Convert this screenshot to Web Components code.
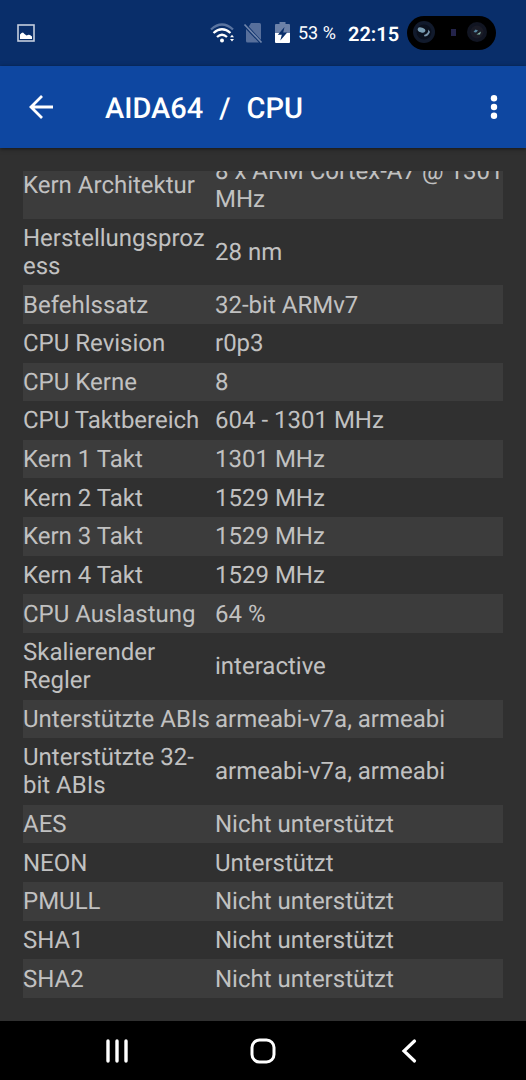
<!DOCTYPE html>
<html lang="de">
<head>
<meta charset="utf-8">
<meta name="viewport" content="width=device-width, initial-scale=1">
<title>AIDA64 / CPU</title>
<style>
  body { margin: 0; background: #303030; font-family: Roboto, "Noto Sans", sans-serif; text-rendering: geometricPrecision; }
</style>
</head>
<body>
<phone-screen>
  <status-bar slot="status"></status-bar>
  <app-bar slot="bar"><span>AIDA64</span><span>/</span><span>CPU</span></app-bar>
  <info-table></info-table>
  <nav-bar slot="nav"></nav-bar>
</phone-screen>

<template id="screen-tpl">
  <style>
    :host { display: flex; flex-direction: column; height: 100vh; background: #303030; }
    main { flex: 1; min-height: 0; display: flex; padding: 23px; box-sizing: border-box; }
    ::slotted(info-table) { flex: 1; }
  </style>
  <slot name="status"></slot>
  <slot name="bar"></slot>
  <main><slot></slot></main>
  <slot name="nav"></slot>
</template>

<template id="status-tpl">
  <style>
    :host { display: flex; align-items: center; height: 66px; flex: none; background: #092e6a; color: #fff; padding: 0 30px 0 17px; box-sizing: border-box; }
    svg { display: block; flex: none; }
    .right { margin-left: auto; display: flex; align-items: center; }
    .wifi { margin-right: 8px; }
    .sim { margin-right: 12px; }
    .battery { margin-right: 8px; }
    .percent { font-size: 18px; line-height: 24px; width: 50px; white-space: nowrap; padding-top: 2px; }
    .time { font-size: 20px; line-height: 24px; width: 52px; font-weight: 600; margin-right: 6px; padding-top: 2px; }
  </style>
  <svg width="18" height="18" viewBox="0 0 18 18" aria-hidden="true">
    <rect x="1" y="1" width="16" height="16" fill="none" stroke="#c5cede" stroke-width="1.6"/>
    <path d="M3 15V10.500L4.500 9L6 8.500L7.500 10L9.500 11.500L11.500 10.700L13 11L15 12.500V15Z" fill="#fff"/>
  </svg>
  <div class="right">
    <svg class="wifi" width="25" height="22" viewBox="0 0 25 22" fill="none" aria-hidden="true">
      <path d="M1 7.500Q12 -2.500 23 7.500" stroke="#5a74a0" stroke-width="2.300"/>
      <path d="M3.500 11Q12 3.500 20.500 11" stroke="#fff" stroke-width="2.300"/>
      <path d="M7 15Q12 10.500 17 15" stroke="#fff" stroke-width="2.300"/>
      <circle cx="12" cy="18.500" r="2" fill="#fff"/>
      <path d="M20 15.300L22 12.800L24 15.300ZM20 17L22 19.500L24 17Z" fill="#fff"/>
    </svg>
    <svg class="sim" width="20" height="22" viewBox="0 0 20 22" aria-hidden="true">
      <path d="M8 1H16.500Q18 1 18 2.500V18L5.800 4.500Z" fill="#576f9b"/>
      <path d="M3 7L16 20.500H4.500Q3 20.500 3 19Z" fill="#576f9b"/>
      <path d="M1.500 2.500L18.500 20.500" stroke="#7186ab" stroke-width="1.700"/>
    </svg>
    <svg class="battery" width="15" height="22" viewBox="0 0 15 22" aria-hidden="true">
      <path d="M4.500 0H10.500V2H14Q15 2 15 3V11H0V3Q0 2 1 2H4.500Z" fill="#6c81a8"/>
      <path d="M0 11H15V20Q15 21 14 21H1Q0 21 0 20Z" fill="#fff"/>
      <path d="M9.500 5L2.800 12.700H6.800L5.300 18.500L12.200 10.600H8.200Z" fill="#092e6a"/>
    </svg>
    <span class="percent">53 %</span>
    <span class="time">22:15</span>
    <svg width="90" height="36" viewBox="0 0 90 36" aria-hidden="true">
      <rect x="1" y="1" width="89" height="34" rx="17" fill="#000"/>
      <circle cx="18" cy="17" r="11" fill="#111a2c"/>
      <circle cx="18" cy="17" r="7.500" fill="#0a101d"/>
      <ellipse cx="15.500" cy="15" rx="4" ry="2.500" transform="rotate(20 15.500 15)" fill="#799cb2"/>
      <path d="M18.500 21.500Q22 21.500 24 17L22.500 14.500Q22 19 18 20Z" fill="#7995ac"/>
      <rect x="45" y="14" width="5" height="7" fill="#23234a"/>
      <circle cx="71" cy="17" r="10" fill="#111522"/>
      <circle cx="71" cy="17" r="6.500" fill="#1a1b26"/>
      <path d="M67.500 17L69.500 14.500L72 15.500L70 17.500Z" fill="#5687a0"/>
      <path d="M70.500 19.500L75 16.500L74 19.500Z" fill="#84b5a5"/>
    </svg>
  </div>
</template>

<template id="bar-tpl">
  <style>
    :host { display: flex; align-items: center; height: 82px; flex: none; background: #0e47a1; color: #fff; padding: 0 16px 0 25px; box-sizing: border-box; box-shadow: 0 1px 4px #0008; }
    button { border: 0; padding: 0; background: none; color: inherit; display: flex; align-items: center; justify-content: center; width: 32px; height: 48px; }
    h1 { flex: 1; display: flex; gap: 16px; margin: 0 0 0 48px; font-size: 29px; line-height: 36px; font-weight: 500; white-space: nowrap; padding-top: 4px; }
  </style>
  <button aria-label="Zurück"><svg width="24" height="24" viewBox="0 0 24 24" fill="none" stroke="#fff" stroke-width="2.800" aria-hidden="true"><path d="M24 12H2.500M13 1L2 12L13 23"/></svg></button>
  <h1><slot></slot></h1>
  <button aria-label="Menü"><svg width="8" height="24" viewBox="0 0 8 24" fill="#fff" aria-hidden="true"><circle cx="4" cy="3.200" r="3.200"/><circle cx="4" cy="12" r="3.200"/><circle cx="4" cy="20.800" r="3.200"/></svg></button>
</template>

<template id="table-tpl">
  <style>
    :host { display: block; min-width: 0; overflow: hidden; }
    /* the list is scrolled a little way past its first row */
    table { display: flex; height: calc(100% + 19px); margin-top: -19px; color: #c1c1c1; font-size: 24px; line-height: 28px; }
    tbody { flex: 1; display: flex; flex-direction: column; }
    tr { flex: 1 0 auto; display: grid; grid-template-columns: 2fr 3fr; align-items: center; }
    tr:nth-child(odd) { background: #3c3c3c; }
    th, td { display: block; padding: 5px 0; min-width: 0; text-align: left; font-weight: 400; overflow-wrap: anywhere; }
    .lines { white-space: nowrap; }
  </style>
  <table><tbody>
    <tr><th scope="row">Kern Architektur</th><td class="lines">8 x ARM Cortex-A7 @ 1301<br>MHz</td></tr>
    <tr><th scope="row">Herstellungsprozess</th><td>28 nm</td></tr>
    <tr><th scope="row">Befehlssatz</th><td>32-bit ARMv7</td></tr>
    <tr><th scope="row">CPU Revision</th><td>r0p3</td></tr>
    <tr><th scope="row">CPU Kerne</th><td>8</td></tr>
    <tr><th scope="row">CPU Taktbereich</th><td>604 - 1301 MHz</td></tr>
    <tr><th scope="row">Kern 1 Takt</th><td>1301 MHz</td></tr>
    <tr><th scope="row">Kern 2 Takt</th><td>1529 MHz</td></tr>
    <tr><th scope="row">Kern 3 Takt</th><td>1529 MHz</td></tr>
    <tr><th scope="row">Kern 4 Takt</th><td>1529 MHz</td></tr>
    <tr><th scope="row">CPU Auslastung</th><td>64 %</td></tr>
    <tr><th scope="row">Skalierender Regler</th><td>interactive</td></tr>
    <tr><th scope="row">Unterstützte ABIs</th><td>armeabi-v7a, armeabi</td></tr>
    <tr><th scope="row">Unterstützte 32-bit ABIs</th><td>armeabi-v7a, armeabi</td></tr>
    <tr><th scope="row">AES</th><td>Nicht unterstützt</td></tr>
    <tr><th scope="row">NEON</th><td>Unterstützt</td></tr>
    <tr><th scope="row">PMULL</th><td>Nicht unterstützt</td></tr>
    <tr><th scope="row">SHA1</th><td>Nicht unterstützt</td></tr>
    <tr><th scope="row">SHA2</th><td>Nicht unterstützt</td></tr>
  </tbody></table>
</template>

<template id="nav-tpl">
  <style>
    :host { display: block; height: 59px; flex: none; background: #000; }
    nav { height: 100%; display: flex; justify-content: space-between; padding: 0 17%; align-items: center; }
    button { border: 0; padding: 0; background: none; width: 56px; height: 48px; display: flex; align-items: center; justify-content: center; }
    svg { fill: none; stroke: #fff; }
  </style>
  <nav>
    <button aria-label="Letzte Apps"><svg width="24" height="26" viewBox="0 0 24 26" stroke-width="3.400" stroke-linecap="round"><path d="M3 3V23M12 3V23M21 3V23"/></svg></button>
    <button aria-label="Startseite"><svg width="26" height="26" viewBox="0 0 26 26" stroke-width="3"><rect x="2" y="2" width="22" height="22" rx="7.500"/></svg></button>
    <button aria-label="Zurück"><svg width="16" height="26" viewBox="0 0 16 26" stroke-width="3.200" stroke-linecap="round"><path d="M13.500 3L3 13L13.500 23"/></svg></button>
  </nav>
</template>

<script>
  function register(name, templateId) {
    customElements.define(name, class extends HTMLElement {
      constructor() {
        super();
        const root = this.attachShadow({ mode: "open" });
        root.append(document.getElementById(templateId).content.cloneNode(true));
      }
    });
  }
  register("phone-screen", "screen-tpl");
  register("status-bar", "status-tpl");
  register("app-bar", "bar-tpl");
  register("info-table", "table-tpl");
  register("nav-bar", "nav-tpl");
</script>
</body>
</html>
